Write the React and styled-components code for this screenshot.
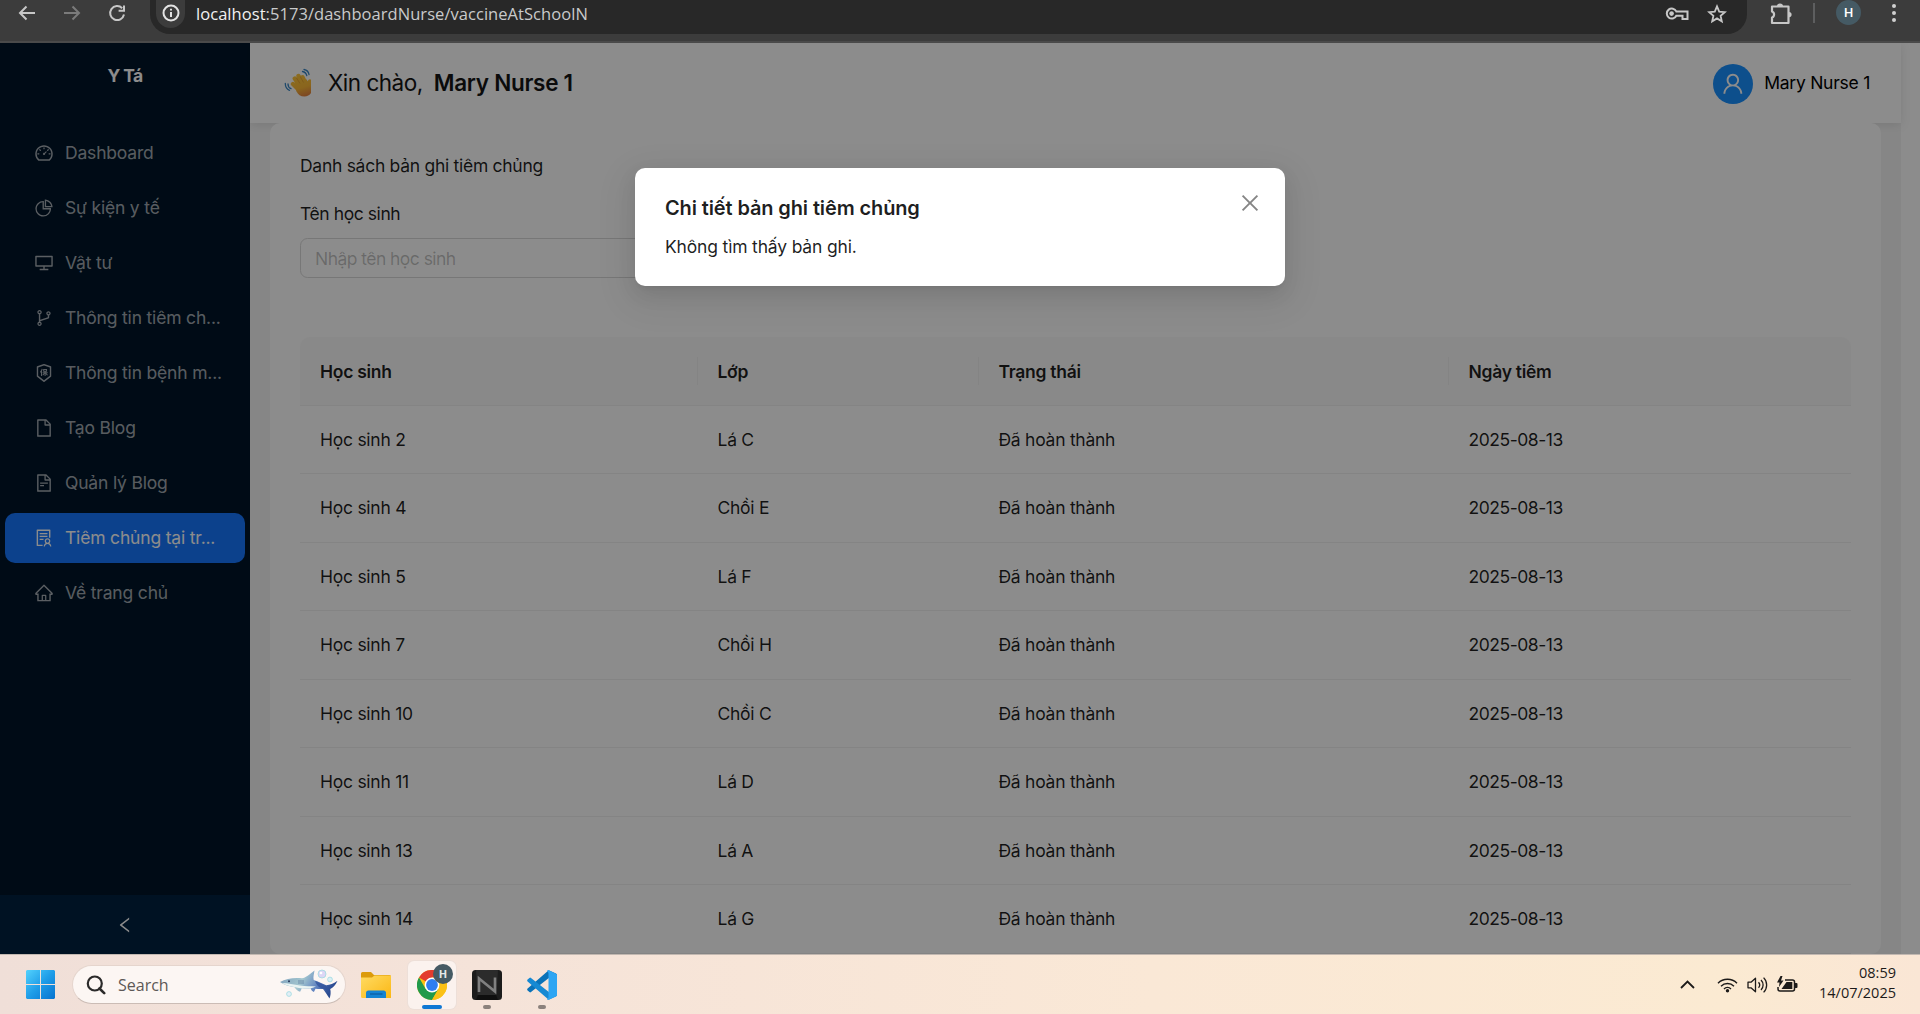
import React from 'react';
import styled, { createGlobalStyle, css } from 'styled-components';
import {
  AiOutlineDashboard, AiOutlinePieChart, AiOutlineDesktop, AiOutlineBranches,
  AiOutlineInsurance, AiOutlineFile, AiOutlineFileText, AiOutlineSolution,
  AiOutlineHome, AiOutlineLeft, AiOutlineUser, AiOutlineClose,
} from 'react-icons/ai';

const appFont = 'Inter, "Liberation Sans", sans-serif';
const systemFont = '"Open Sans", "Noto Sans", sans-serif';

const GlobalStyle = createGlobalStyle`
  *, *::before, *::after { box-sizing: border-box; }
  body { margin: 0; overflow: hidden; font-family: ${appFont}; }
  svg { display: block; flex: none; }
`;

const Screen = styled.div`
  display: flex;
  flex-direction: column;
  width: 1920px;
  height: 1014px;
`;

/* ---------- browser bar ---------- */
const BrowserBar = styled.header`
  display: flex;
  flex: none;
  height: 43px;
  padding-left: 15px;
  background: #3c3c3c;
  border-bottom: 2px solid #4a4a4a;
`;
const NavButtons = styled.div`
  display: flex;
  gap: 21px;
  width: 135px;
  height: 25px;
  align-items: center;
`;
const AddressBar = styled.div`
  display: flex;
  justify-content: space-between;
  width: 1597px;
  height: 34px;
  padding: 0 20px 7px 6px;
  align-items: center;
  background: #282828;
  border-radius: 0 0 20px 20px;
`;
const AddressLeft = styled.div`
  display: flex;
  align-items: center;
  gap: 11px;
`;
const SiteInfo = styled.div`
  display: flex;
  align-items: flex-end;
  justify-content: center;
  width: 29px;
  height: 28px;
  padding-bottom: 6px;
  background: #3c3c3c;
  border-radius: 0 0 15px 15px;
`;
const Url = styled.div`
  color: #c9cacb;
  font: 16.5px/24px ${systemFont};
  letter-spacing: 0.05px;
  b { color: #f1f1f1; font-weight: 400; }
`;
const AddressActions = styled.div`
  display: flex;
  align-items: center;
  gap: 18px;
`;
const BarActions = styled.div`
  display: flex;
  align-items: center;
  height: 25px;
  padding-left: 23px;
`;
const BarDivider = styled.div`
  width: 2px;
  height: 20px;
  margin: 0 21px 0 20px;
  background: #5d5e5f;
`;
const Profile = styled.div`
  display: flex;
  align-items: center;
  justify-content: center;
  width: 25px;
  height: 25px;
  margin-right: 30px;
  border-radius: 50%;
  background: #455a64;
  color: #fff;
  font: 500 13px/25px Roboto, sans-serif;
`;

/* ---------- page ---------- */
const Viewport = styled.main`
  position: relative;
  display: flex;
  flex: none;
  height: 911px;
  overflow: hidden;
  background: #fff;
`;
const Sider = styled.aside`
  display: flex;
  flex-direction: column;
  flex: none;
  width: 250px;
  background: #001529;
`;
const Brand = styled.div`
  height: 80px;
  padding-top: 20px;
  color: #fff;
  font-size: 17.5px;
  font-weight: 700;
  line-height: 25px;
  letter-spacing: -0.6px;
  text-align: center;
`;
const Menu = styled.nav`
  display: flex;
  flex: 1;
  flex-direction: column;
  gap: 5px;
  padding: 5px;
`;
const MenuItem = styled.a`
  display: flex;
  flex: none;
  align-items: center;
  gap: 11px;
  height: 50px;
  padding-left: 29px;
  border-radius: 10px;
  color: ${(p) => (p.$active ? '#fff' : 'rgba(255, 255, 255, 0.65)')};
  background: ${(p) => (p.$active ? '#1677ff' : 'transparent')};
  font-size: 17.5px;
  letter-spacing: -0.18px;
  white-space: nowrap;
  span { padding-bottom: 2px; }
`;
const Collapse = styled.div`
  display: flex;
  align-items: center;
  justify-content: center;
  height: 59px;
  color: #fff;
  background: #002140;
`;
const Main = styled.div`
  display: flex;
  flex-direction: column;
  flex: none;
  width: 1651px;
  background: #f5f5f5;
`;
const PageHeader = styled.header`
  display: flex;
  flex: none;
  justify-content: space-between;
  height: 80px;
  padding: 0 31px 0 34px;
  align-items: center;
  background: #fff;
  box-shadow: 0 2px 10px rgba(0, 0, 0, 0.1);
`;
const Greeting = styled.div`
  display: flex;
  align-items: center;
  padding-bottom: 1px;
  font-size: 22.5px;
  letter-spacing: -0.5px;
  color: #141414;
  b { margin-left: 11px; font-weight: 600; letter-spacing: -0.28px; }
`;
const Wave = styled.span`
  display: flex;
  width: 44px;
`;
const UserBox = styled.div`
  display: flex;
  align-items: center;
  gap: 11px;
  padding-top: 1px;
  color: #000;
  font-size: 17.5px;
  letter-spacing: -0.25px;
  span { padding-bottom: 3px; }
`;
const Avatar = styled.div`
  display: flex;
  align-items: center;
  justify-content: center;
  width: 40px;
  height: 40px;
  border-radius: 50%;
  color: #fff;
  background: #1890ff;
`;
const Card = styled.section`
  flex: 1 0 auto;
  margin: 0 20px;
  padding: 30px 30px 0;
  background: #fff;
  border-radius: 10px;
  color: rgba(0, 0, 0, 0.88);
  font-size: 17.5px;
  letter-spacing: -0.28px;
`;
const CardTitle = styled.div`
  height: 48px;
  line-height: 26px;
`;
const Label = styled.label`
  display: block;
  height: 37px;
  line-height: 25px;
  letter-spacing: -0.42px;
`;
const Field = styled.div`
  width: 400px;
  height: 40px;
  padding-left: 14px;
  border: 1px solid #d9d9d9;
  border-radius: 7.5px;
  color: rgba(0, 0, 0, 0.25);
  line-height: 39px;
  letter-spacing: -0.55px;
`;
const Table = styled.div`
  margin-top: 59px;
`;
const columns = css`
  display: grid;
  grid-template-columns: 397.5px 281px 470px 402.5px;
  align-items: center;
  height: 68.5px;
  border-bottom: 1px solid #f0f0f0;
`;
const HeadRow = styled.div`
  ${columns}
  background: #fafafa;
  border-radius: 10px 10px 0 0;
  font-weight: 600;
`;
const HeadCell = styled.div`
  display: flex;
  align-items: center;
  height: 28px;
  padding: 1px 0 0 20px;
  border-right: ${(p) => (p.$last ? 'none' : '1px solid #f0f0f0')};
`;
const Row = styled.div`
  ${columns}
`;
const Cell = styled.div`
  padding-left: 20px;
  letter-spacing: ${(p) => (p.$date ? '-0.46px' : '-0.26px')};
`;
const Mask = styled.div`
  position: absolute;
  inset: 0;
  display: flex;
  justify-content: center;
  align-items: flex-start;
  padding-top: 125px;
  background: rgba(0, 0, 0, 0.45);
`;
const Dialog = styled.div`
  display: flex;
  justify-content: space-between;
  width: 650px;
  height: 118px;
  padding: 25px 23px 25px 30px;
  background: #fff;
  border-radius: 10px;
  color: rgba(0, 0, 0, 0.88);
  box-shadow: 0 7.5px 20px rgba(0, 0, 0, 0.08), 0 3.75px 7.5px -5px rgba(0, 0, 0, 0.12),
    0 11px 35px 10px rgba(0, 0, 0, 0.06);
`;
const DialogTitle = styled.div`
  margin-bottom: 10px;
  font-size: 20px;
  font-weight: 600;
  line-height: 30px;
  letter-spacing: -0.12px;
`;
const DialogText = styled.div`
  font-size: 17.5px;
  line-height: 28px;
  letter-spacing: -0.17px;
`;
const CloseButton = styled.div`
  margin-top: -2px;
  color: rgba(0, 0, 0, 0.48);
`;

/* ---------- taskbar ---------- */
const Taskbar = styled.footer`
  display: flex;
  flex: none;
  justify-content: space-between;
  height: 60px;
  border-top: 1px solid #c2b8b1;
  background: linear-gradient(90deg, #f0dfd8 0%, #f5e3d9 25%, #fae8d6 60%, #fbead2 90%, #fae6d5 100%);
  font-family: ${systemFont};
`;
const TaskLeft = styled.div`
  display: flex;
  align-items: center;
  padding-left: 26px;
`;
const SearchBox = styled.div`
  display: flex;
  align-items: center;
  width: 274px;
  height: 39px;
  margin: 0 15px 0 17px;
  padding: 0 6px 0 13px;
  border: 1px solid #e5d5cd;
  border-bottom-color: #cbbcb5;
  border-radius: 20px;
  background: #fcf6f3;
`;
const SearchText = styled.span`
  flex: 1;
  margin-left: 12px;
  color: #5c5856;
  font-size: 16px;
  line-height: 24px;
`;
const TaskApp = styled.div`
  position: relative;
  display: flex;
  align-items: center;
  justify-content: center;
  width: 48px;
  height: 48px;
  margin-right: 7px;
  border-radius: 6px;
  ${(p) => p.$focused && css`
    background: #fbf2ee;
    box-shadow: 0 0 0 1px #eddfd8;
  `}
  &::after {
    content: '';
    position: absolute;
    bottom: 0;
    width: ${(p) => (p.$focused ? '20px' : '8px')};
    height: 4px;
    border-radius: 2px;
    background: ${(p) => (p.$focused ? '#0f78d4' : '#8b817c')};
  }
`;
const FolderSlot = styled.div`
  width: 47px;
`;
const Badge = styled.span`
  position: absolute;
  top: 3px;
  left: 25px;
  width: 20px;
  height: 20px;
  border-radius: 50%;
  background: #455a64;
  color: #e4e8ea;
  font-size: 11px;
  font-weight: 700;
  line-height: 20px;
  text-align: center;
`;
const Tray = styled.div`
  display: flex;
  align-items: center;
  padding-right: 24px;
`;
const TrayIcons = styled.div`
  display: flex;
  align-items: center;
  gap: 9px;
  margin-left: 22px;
`;
const Clock = styled.div`
  width: 98px;
  padding-bottom: 3px;
  color: #1c1a19;
  font-size: 14.5px;
  line-height: 20px;
  text-align: right;
`;

/* ---------- drawings ---------- */
const Stroke = ({ w, h = w, box = `0 0 ${w} ${h}`, color = '#c7c7c7', sw = 2, children }) => (
  <svg width={w} height={h} viewBox={box} fill="none" stroke={color} strokeWidth={sw}>{children}</svg>
);
const ArrowBack = () => <Stroke w={24}><path d="M20 12H5M11.5 5.5L5 12l6.5 6.5" /></Stroke>;
const ArrowForward = () => <Stroke w={24} color="#7b7b7b"><path d="M4 12h15M12.5 5.5L19 12l-6.5 6.5" /></Stroke>;
const Reload = () => (
  <Stroke w={24}><path d="M17.2 7.2A7 7 0 1 0 19 13.5M19 4.5v5.2h-5.4" /></Stroke>
);
const Info = () => (
  <Stroke w={18} color="#e3e3e3"><circle cx="9" cy="9" r="7.5" /><path d="M9 8v5M9 4.8v1.8" /></Stroke>
);
const Key = () => (
  <Stroke w={24} h={16}>
    <path d="M11.3 5.4h11.2v7.500h-5V9.7h-6.2A5 5 0 1 1 11.3 5.4z" />
    <circle cx="6.6" cy="7.6" r="2.300" fill="#c7c7c7" stroke="none" />
  </Stroke>
);
const Star = () => (
  <Stroke w={20} h={20} sw={1.8}><path d="M10 2.4l2.2 5.2 5.6.5-4.2 3.7 1.2 5.5L10 14.4l-4.8 2.9 1.2-5.5L2.2 8.1l5.6-.5z" /></Stroke>
);
const Puzzle = () => (
  <Stroke w={23} h={24} sw={2.2}>
    <path d="M2 5.5h16.500V22H2v-5.500a3.200 3.200 0 0 0 0-6z" strokeLinejoin="round" />
    <path d="M7 5a3 2.6 0 0 1 6 0zM19 11a2.600 2.600 0 0 1 0 5.200z" fill="#c7c7c7" stroke="none" />
  </Stroke>
);
const Dots = () => (
  <svg width="6" height="20" fill="#d0d0d0"><circle cx="3" cy="3" r="2" /><circle cx="3" cy="10" r="2" /><circle cx="3" cy="17" r="2" /></svg>
);

const WavingHand = () => (
  <svg width="28" height="32" viewBox="0 0 28 32">
    <defs>
      <linearGradient id="hand" gradientUnits="userSpaceOnUse" x1="12" y1="6" x2="19" y2="29">
        <stop offset="0" stopColor="#ffc83d" /><stop offset="0.65" stopColor="#fbb936" /><stop offset="1" stopColor="#e5863f" />
      </linearGradient>
      <clipPath id="handEdge"><path d="M0 0h27v32H0z" /></clipPath>
    </defs>
    <g clipPath="url(#handEdge)">
      <g stroke="url(#hand)" strokeWidth="4.400" strokeLinecap="round">
        <path d="M9 17l6 6M10.800 11.500l6 9M14.500 9l5 9M18.500 10.300l4 8M26 14.500l-2 7" />
      </g>
      <path d="M11 19.500l4-4.500 7-3 4 5 2 5c0 5-3.500 7.500-7.500 7.500-4 0-6.500-2-8-5z" fill="url(#hand)" />
      <path d="M16 16.500l-3.500-5.500M19.500 15.500l-3.300-6" stroke="#e09a2c" strokeWidth=".7" fill="none" />
    </g>
    <path d="M18.500 4.500c2.300.4 3.800 2 4.300 4.200M20 2.500c3 .6 4.600 2.600 5 5M4 17c0 2.300 1 3.900 3 4.700M1.300 16.500c0 3.600 1.600 5.700 4.200 6.800" stroke="#3a86c4" strokeWidth="1.300" fill="none" strokeLinecap="round" />
  </svg>
);

const WindowsLogo = () => (
  <svg width="29" height="29" viewBox="0 0 29 29">
    <defs>
      <linearGradient id="win" gradientUnits="userSpaceOnUse" x1="0" y1="0" x2="29" y2="29">
        <stop offset="0" stopColor="#53d2fd" /><stop offset="0.5" stopColor="#1f9de8" /><stop offset="1" stopColor="#0672cf" />
      </linearGradient>
    </defs>
    <path d="M1 0h13v14H0V1zM15 0h13l1 1v13H15zM0 15h14v14H1l-1-1zM15 15h14v13l-1 1H15z" fill="url(#win)" />
  </svg>
);
const Shark = () => (
  <svg width="60" height="32" viewBox="0 0 60 32">
    <defs>
      <linearGradient id="shark" x1="0" y1="0" x2="1" y2=".3">
        <stop offset="0" stopColor="#7c9dbb" /><stop offset=".45" stopColor="#a3c6cf" /><stop offset=".75" stopColor="#5d80c0" /><stop offset="1" stopColor="#2b4b90" />
      </linearGradient>
    </defs>
    <path d="M1 13c6-3.5 14-4.6 22-3.8 4-.4 6-3 12.5-7.7-.6 4-1.5 6.5-.8 9.5 5 1.7 9 3.6 12.5 5.2 4-.2 7-1.3 11.3-4.4-2 4.5-4.3 6.6-7.3 8.2.8 3 .5 6.5-.7 9.5-2.5-4-4.5-7-6.5-9.5-2.5.1-5 .1-7.5-.2l-1.6 3.2c-2-.8-2.7-2-3.3-3.7-3 .3-6 .3-8.8-.1l-1.7 3.6c-3-1-4.5-2.7-5.500-4.5C11 17.5 5 16 1 13z" fill="url(#shark)" />
    <path d="M3 14c6 .2 12 1.5 18 2.5 6 .8 11 .6 16 .9-5 2.3-11 2.6-17 1.600C13 17.9 7 16.500 3 14z" fill="#e9f3f2" />
    <path d="M36 12c4 1 8 3.5 12 5.8l8-2.5-5.5 4.8.6 6-5.3-6c-5-.7-8-3-9.8-8.100z" fill="#30529a" opacity=".75" />
    <circle cx="10" cy="12.2" r="1" fill="#26385c" />
    <path d="M20 11v4M22 11v4M24 11v4" stroke="#58779d" strokeWidth=".7" />
    <g stroke="#9edbe1" strokeWidth=".8">
      <circle cx="43" cy="5" r="4" fill="#ddd6f5" /><circle cx="51" cy="10.5" r="2.4" fill="#d9eff5" /><circle cx="10" cy="25" r="2.4" fill="#e2eef6" />
    </g>
    <circle cx="42" cy="4" r="1.3" fill="#fff" />
  </svg>
);
const Folder = () => (
  <svg width="30" height="28" viewBox="0 0 30 28">
    <defs>
      <linearGradient id="folder" x1="0" y1="0" x2="1" y2="1"><stop offset="0" stopColor="#ffdb62" /><stop offset="1" stopColor="#fbb714" /></linearGradient>
    </defs>
    <path d="M0 2.5Q0 1 1.5 1H10l3 3h15.5Q30 4 30 5.5V9H0z" fill="#dc9b0b" />
    <path d="M0 6.5h11l2.5-2H30V27H1.5Q0 27 0 25.5z" fill="url(#folder)" />
    <path d="M5 27v-5q0-2.5 2.5-2.5h15q2.5 0 2.5 2.5v5z" fill="#1483d3" />
    <path d="M9 23h12.5" stroke="#0b5aa0" strokeWidth="1.2" />
  </svg>
);
const Chrome = () => (
  <svg width="30" height="30" viewBox="0 0 30 30">
    <circle cx="15" cy="15" r="15" fill="#fbbf12" />
    <path d="M15 15L2 7.5A15 15 0 0 1 28 7.5H15z" fill="#e33b2e" />
    <path d="M2 7.5A15 15 0 0 0 15 30l6.5-11.2L15 15 8.5 18.7z" fill="#219a4b" />
    <path d="M28 7.5A15 15 0 0 1 15 30l6.5-11.2L15 7.5z" fill="#fbc116" />
    <circle cx="15" cy="15" r="7.4" fill="#fff" /><circle cx="15" cy="15" r="5.9" fill="#2f7ef0" />
  </svg>
);
const NeoTool = () => (
  <svg width="30" height="30" viewBox="0 0 30 30">
    <rect width="30" height="30" rx="3.5" fill="#1c1c1c" />
    <path d="M4 0h22l-1.5 25h-19z" fill="#2b2b2b" />
    <path d="M4 30l2-5h18l2 5z" fill="#0f0f0f" />
    <path d="M7 22V8.500l16 13V7.500" fill="none" stroke="#808080" strokeWidth="2.6" />
  </svg>
);
const VsCode = () => (
  <svg width="30" height="30" viewBox="0 0 30 30">
    <path d="M21.7.3L29 3.5q1 .5 1 1.7L21.5 8.2 4 22.1q-.8.6-1.6 0L.6 20.4q-.9-.9 0-1.8z" fill="#0a72b8" />
    <path d="M21.7 29.7l7.3-3.2q1-.5 1-1.7l-8.5-3L4 7.9q-.8-.6-1.6 0L.6 9.6q-.9.9 0 1.8z" fill="#1689d3" />
    <path d="M21.7 29.7c-.9.4-1.7 0-1.7-.5 0-.4 1.5-.9 1.5-2.5V3.5C21.5 2 20 1.200 20 .8c0-.5.8-.9 1.7-.5L29 3.7q1 .6 1 1.7v19.2q0 1.2-1 1.7z" fill="#2da5f3" />
  </svg>
);

const TrayUp = () => <Stroke w={15} h={9} color="#1c1a19" sw={1.8}><path d="M1 8l6.5-6.5L14 8" /></Stroke>;
const Wifi = () => (
  <Stroke w={21} h={16} color="#1c1a19" sw={1.4}>
    <path d="M1 6.2a13.4 13.4 0 0 1 19 0M4 9.2a9.2 9.2 0 0 1 13 0M7 12a5 5 0 0 1 7 0" /><circle cx="10.5" cy="13.8" r="1.7" fill="#1c1a19" stroke="none" />
  </Stroke>
);
const Volume = () => (
  <Stroke w={21} h={18} color="#1c1a19" sw={1.3}>
    <path d="M1 6.200h3l4.500-4v13.600l-4.500-4H1zM11.5 6.300a4 4 0 0 1 0 5.400M14 4a7 7 0 0 1 0 10M16.600 1.600a10.500 10.500 0 0 1 0 14.800" strokeLinejoin="round" />
  </Stroke>
);
const Battery = () => (
  <Stroke w={21} h={18} color="#1c1a19" sw={1.5}>
    <path d="M8 4h7.500q2 0 2 2v7q0 2-2 2H3q-2 0-2-2v-2" /><path d="M4.5 13l5-7h5.800v7z" fill="#1c1a19" stroke="none" />
    <path d="M18 7h1.500q1 0 1 1v3q0 1-1 1H18zM3.500 0L0 6.500h2.500L2 11l4.500-6.500H4L5.500 0z" fill="#1c1a19" stroke="none" />
  </Stroke>
);
const SearchIcon = () => (
  <Stroke w={20} h={20} color="#2b2a2a" sw={2.2}><circle cx="8.8" cy="8.5" r="7" /><path d="M13.5 13.5l4.7 4.7" strokeLinecap="round" strokeWidth="2.6" /></Stroke>
);

const menu = [
  [AiOutlineDashboard, 'Dashboard'],
  [AiOutlinePieChart, 'Sự kiện y tế'],
  [AiOutlineDesktop, 'Vật tư'],
  [AiOutlineBranches, 'Thông tin tiêm ch...'],
  [AiOutlineInsurance, 'Thông tin bệnh m...'],
  [AiOutlineFile, 'Tạo Blog'],
  [AiOutlineFileText, 'Quản lý Blog'],
  [AiOutlineSolution, 'Tiêm chủng tại tr...', true],
  [AiOutlineHome, 'Về trang chủ'],
];
const heads = ['Học sinh', 'Lớp', 'Trạng thái', 'Ngày tiêm'];
const students = [
  [2, 'Lá C'], [4, 'Chồi E'], [5, 'Lá F'], [7, 'Chồi H'],
  [10, 'Chồi C'], [11, 'Lá D'], [13, 'Lá A'], [14, 'Lá G'],
];

export default function App() {
  return (
    <Screen>
      <GlobalStyle />
      <BrowserBar>
        <NavButtons><ArrowBack /><ArrowForward /><Reload /></NavButtons>
        <AddressBar>
          <AddressLeft>
            <SiteInfo><Info /></SiteInfo>
            <Url><b>localhost</b>:5173/dashboardNurse/vaccineAtSchoolN</Url>
          </AddressLeft>
          <AddressActions><Key /><Star /></AddressActions>
        </AddressBar>
        <BarActions>
          <Puzzle /><BarDivider /><Profile>H</Profile><Dots />
        </BarActions>
      </BrowserBar>

      <Viewport>
        <Sider>
          <Brand>Y Tá</Brand>
          <Menu>
            {menu.map(([Icon, label, active]) => (
              <MenuItem key={label} $active={active}><Icon size={20} /><span>{label}</span></MenuItem>
            ))}
          </Menu>
          <Collapse><AiOutlineLeft size={20} /></Collapse>
        </Sider>
        <Main>
          <PageHeader>
            <Greeting><Wave><WavingHand /></Wave>Xin chào,<b>Mary Nurse 1</b></Greeting>
            <UserBox><Avatar><AiOutlineUser size={25.7} /></Avatar><span>Mary Nurse 1</span></UserBox>
          </PageHeader>
          <Card>
            <CardTitle>Danh sách bản ghi tiêm chủng</CardTitle>
            <Label>Tên học sinh</Label>
            <Field>Nhập tên học sinh</Field>
            <Table>
              <HeadRow>
                {heads.map((h, i) => <HeadCell key={h} $last={i === 3}>{h}</HeadCell>)}
              </HeadRow>
              {students.map(([n, cls]) => (
                <Row key={n}>
                  <Cell>Học sinh {n}</Cell>
                  <Cell>{cls}</Cell>
                  <Cell>Đã hoàn thành</Cell>
                  <Cell $date>2025-08-13</Cell>
                </Row>
              ))}
            </Table>
          </Card>
        </Main>
        <Mask>
          <Dialog>
            <div>
              <DialogTitle>Chi tiết bản ghi tiêm chủng</DialogTitle>
              <DialogText>Không tìm thấy bản ghi.</DialogText>
            </div>
            <CloseButton><AiOutlineClose size={24} /></CloseButton>
          </Dialog>
        </Mask>
      </Viewport>

      <Taskbar>
        <TaskLeft>
          <WindowsLogo />
          <SearchBox><SearchIcon /><SearchText>Search</SearchText><Shark /></SearchBox>
          <FolderSlot><Folder /></FolderSlot>
          <TaskApp $focused><Chrome /><Badge>H</Badge></TaskApp>
          <TaskApp><NeoTool /></TaskApp>
          <TaskApp><VsCode /></TaskApp>
        </TaskLeft>
        <Tray>
          <TrayUp />
          <TrayIcons><Wifi /><Volume /><Battery /></TrayIcons>
          <Clock>08:59<br />14/07/2025</Clock>
        </Tray>
      </Taskbar>
    </Screen>
  );
}
